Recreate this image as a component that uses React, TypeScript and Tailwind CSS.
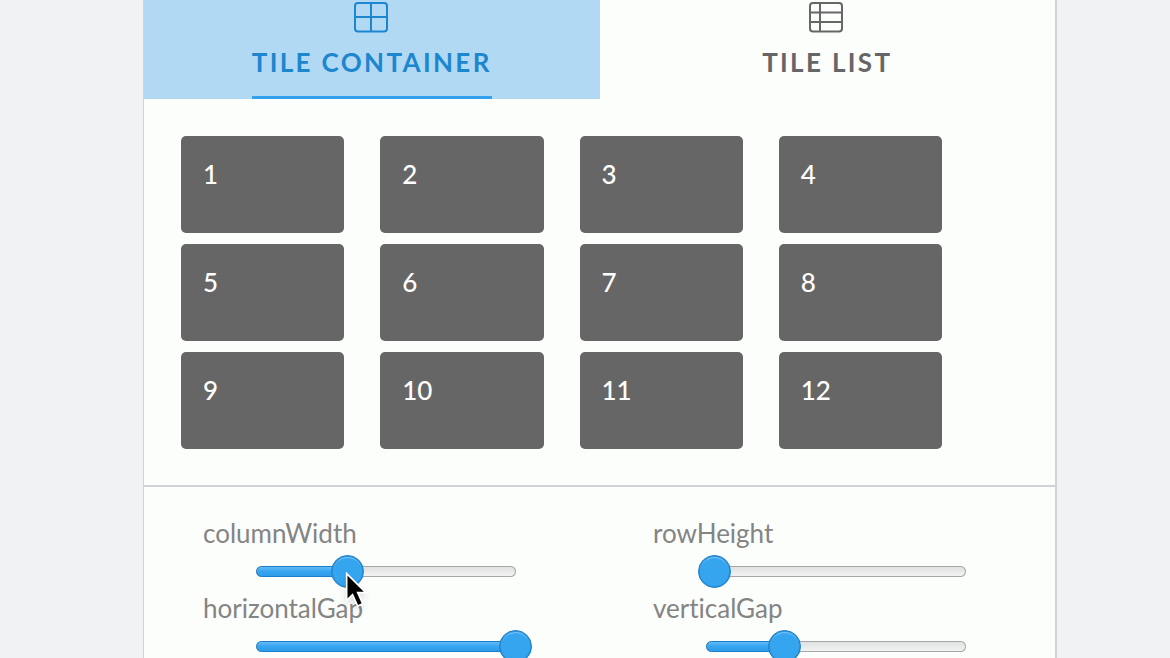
import { useState } from "react";

const tiles = [1, 2, 3, 4, 5, 6, 7, 8, 9, 10, 11, 12];

function GridIcon() {
  return (
    <svg width="36" height="32" viewBox="0 0 36 32" fill="none" stroke="currentColor" strokeWidth="2" aria-hidden="true">
      <rect x="1" y="2" width="32" height="28.5" rx="3" />
      <path d="M17 2v28.5M1 16h32" />
    </svg>
  );
}

function ListIcon() {
  return (
    <svg width="36" height="32" viewBox="0 0 36 32" fill="none" stroke="currentColor" strokeWidth="2" aria-hidden="true">
      <rect x="1" y="2" width="32" height="28.5" rx="3" />
      <path d="M11 2v28.5M1 11.5h32M1 21h32" />
    </svg>
  );
}

function Pointer() {
  return (
    <svg
      className="pointer-events-none absolute top-[17px] left-[105px] z-10 drop-shadow-md"
      width="27"
      height="37"
      viewBox="0 0 26 36"
      aria-hidden="true"
    >
      <path d="M1.5 1.5v26l5.7-5.5 5 11.2 5-2.2-5-11h8z" fill="#000" stroke="#fff" strokeWidth="1.6" />
    </svg>
  );
}

function Slider({ name, initial, pointer = false }: { name: string; initial: number; pointer?: boolean }) {
  const [value, setValue] = useState(initial);
  return (
    <div className="flex flex-col">
      <label
        htmlFor={name}
        className="h-[38px] text-[26px] leading-[32px] text-[#848484] [font-variant-ligatures:none]"
      >
        {name}
      </label>
      <div className="relative ml-[37px] grid h-[37px] w-[292px] items-start">
        <div className="col-start-1 row-start-1 mx-4 mt-[11px] flex h-[11px] overflow-hidden rounded-full bg-linear-to-b from-[#dedfdf] to-[#f4f5f4] inset-ring inset-ring-[#a5a7a9]">
          <div
            className="rounded-l-full border border-[#1a7fc8] bg-linear-to-b from-[#62bbf7] via-[#36a5f0] to-[#2f9ce8]"
            style={{ width: `${value}%` }}
          />
        </div>
        <input
          id={name}
          type="range"
          min="0"
          max="100"
          value={value}
          onChange={(event) => setValue(Number(event.target.value))}
          className="relative col-start-1 row-start-1 h-[33px] w-full appearance-none bg-transparent [&::-webkit-slider-thumb]:size-[33px] [&::-webkit-slider-thumb]:appearance-none [&::-webkit-slider-thumb]:rounded-full [&::-webkit-slider-thumb]:border [&::-webkit-slider-thumb]:border-[#1a7fc8] [&::-webkit-slider-thumb]:bg-[#36a5ef] [&::-webkit-slider-thumb]:shadow-[inset_0_0_0_1px_#2b93dd,inset_0_2px_1px_#7cc8fa]"
        />
        {pointer && <Pointer />}
      </div>
    </div>
  );
}

export default function App() {
  return (
    <div className="h-screen overflow-hidden bg-[#f1f2f3] pr-[113px] pl-[143px] font-['Lato',sans-serif]">
      <main className="min-h-full border-r-2 border-l border-[#d0d3d5] bg-[#fcfefc]">
        <div className="grid grid-cols-2" role="tablist">
          <button
            role="tab"
            aria-selected="true"
            className="flex flex-col items-center bg-[#b2d9f4] pt-px text-[26px] leading-[32px] font-bold tracking-[0.09em] text-[#1c86cf]"
          >
            <GridIcon />
            <span className="mt-[13px] border-b-[3px] border-[#33a2ee] pb-[18px]">TILE CONTAINER</span>
          </button>
          <button
            role="tab"
            aria-selected="false"
            className="flex flex-col items-center pt-px text-[26px] leading-[32px] font-bold tracking-[0.09em] text-[#666666]"
          >
            <ListIcon />
            <span className="mt-[13px] border-b-[3px] border-transparent pb-[18px]">TILE LIST</span>
          </button>
        </div>

        <section className="grid grid-cols-4 gap-x-9 gap-y-[11px] border-b-2 border-[#d0d3d5] pt-[37px] pr-[113px] pb-9 pl-[37px]">
          {tiles.map((tile) => (
            <div
              key={tile}
              className="h-[97px] rounded-[5px] bg-[#666666] px-[22px] py-[22px] text-[26px] leading-[32px] font-medium text-white"
            >
              {tile}
            </div>
          ))}
        </section>

        <section className="grid grid-cols-2 gap-x-[108px] pt-[30px] pr-[60px] pl-[59px]">
          <Slider name="columnWidth" initial={35} pointer />
          <Slider name="rowHeight" initial={3} />
          <Slider name="horizontalGap" initial={100} />
          <Slider name="verticalGap" initial={30} />
        </section>
      </main>
    </div>
  );
}
